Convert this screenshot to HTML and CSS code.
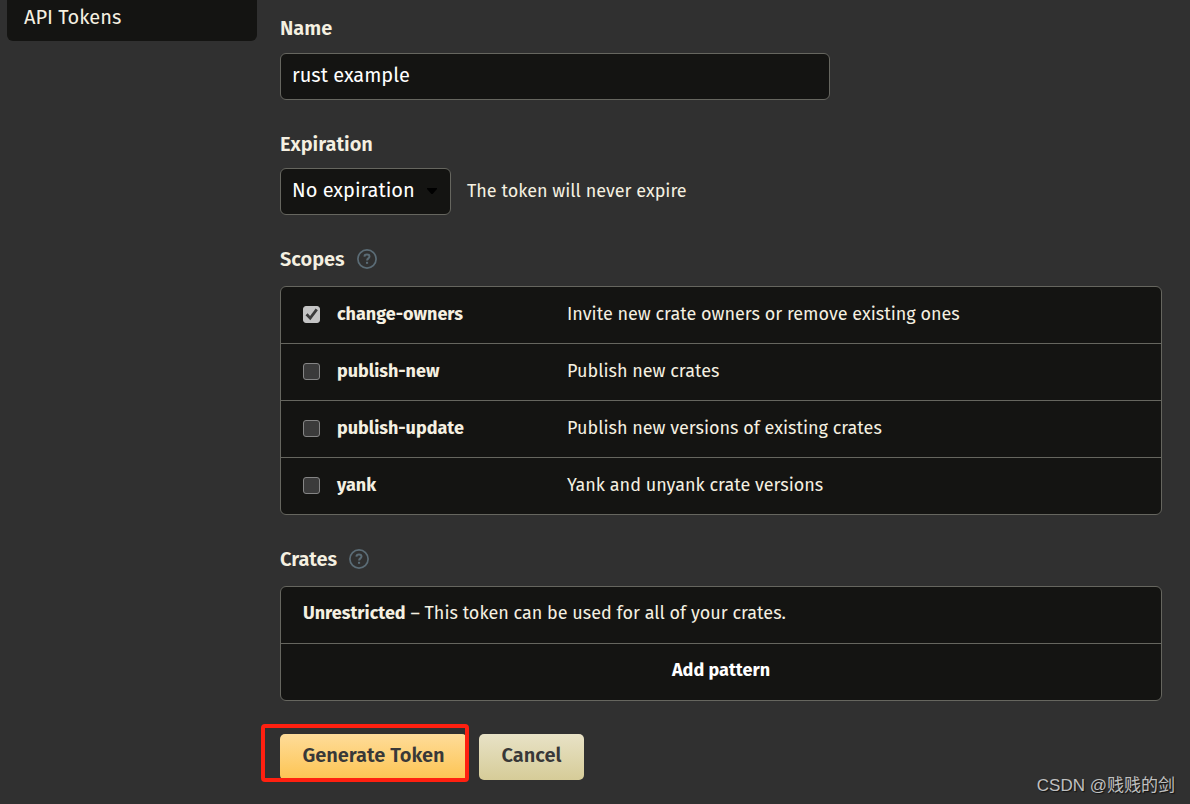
FILE: index.html
```html
<!DOCTYPE html>
<html lang="en">
<head>
<meta charset="utf-8">
<title>New API Token</title>
<link rel="stylesheet" href="styles.css">
</head>
<body>
<div class="page">
  <nav class="sidebar"><a class="sidebar-link" href="#">API Tokens</a></nav>
  <main class="main">
    <form class="form">
      <div class="group">
        <label class="group-label" for="name">Name</label>
        <input class="field name-input" id="name" type="text" value="rust example">
      </div>
      <div class="group expiry-group">
        <label class="group-label" for="expiry">Expiration</label>
        <div class="expiry-row">
          <div class="select-wrap">
            <select class="field select" id="expiry"><option>No expiration</option></select>
            <svg class="caret" viewBox="0 0 10 6" width="10" height="6" aria-hidden="true"><path d="M0 0h10v1L5.6 6H4.4L0 1z" fill="#000"/></svg>
          </div>
          <span class="expiry-note">The token will never expire</span>
        </div>
      </div>
      <div class="group list-group">
        <div class="group-label">Scopes
          <a class="help" href="#" aria-label="Help on scopes"><svg viewBox="0 0 20 20" width="20" height="20" fill="none" stroke="#5b6c76"><circle cx="10" cy="10" r="9.1" stroke-width="1.7"/><path d="M7.4 7.6C7.5 6.2 8.6 5.6 10 5.6c1.5 0 2.5.8 2.5 2 0 1.8-2.4 1.7-2.4 3.8" stroke-width="2"/><path d="M9 12.8h2.1v2H9z" fill="#5b6c76" stroke="none"/></svg></a>
        </div>
        <ul class="list">
          <li><label class="row scope"><input class="check" type="checkbox" checked><strong>change-owners</strong><span>Invite new crate owners or remove existing ones</span></label></li>
          <li><label class="row scope"><input class="check" type="checkbox"><strong>publish-new</strong><span>Publish new crates</span></label></li>
          <li><label class="row scope"><input class="check" type="checkbox"><strong>publish-update</strong><span>Publish new versions of existing crates</span></label></li>
          <li><label class="row scope"><input class="check" type="checkbox"><strong>yank</strong><span>Yank and unyank crate versions</span></label></li>
        </ul>
      </div>
      <div class="group list-group">
        <div class="group-label">Crates
          <a class="help" href="#" aria-label="Help on crates"><svg viewBox="0 0 20 20" width="20" height="20" fill="none" stroke="#5b6c76"><circle cx="10" cy="10" r="9.1" stroke-width="1.7"/><path d="M7.4 7.6C7.5 6.2 8.6 5.6 10 5.6c1.5 0 2.5.8 2.5 2 0 1.8-2.4 1.7-2.4 3.8" stroke-width="2"/><path d="M9 12.8h2.1v2H9z" fill="#5b6c76" stroke="none"/></svg></a>
        </div>
        <ul class="list">
          <li class="row"><p class="text"><strong>Unrestricted</strong> – This token can be used for all of your crates.</p></li>
          <li><button class="row add" type="button">Add pattern</button></li>
        </ul>
      </div>
      <div class="actions">
        <div class="generate-wrap"><button class="button generate" type="submit">Generate Token</button></div>
        <button class="button cancel" type="button">Cancel</button>
      </div>
    </form>
  </main>
  <div class="watermark">CSDN @贱贱的剑</div>
</div>
</body>
</html>
```
FILE: styles.css
```css
* { box-sizing: border-box; }

body {
  margin: 0;
  background: #303030;
  color: #f5f0e1;
  font: 18px/24px "Fira Sans", "Noto Sans", sans-serif;
}

.page {
  position: relative;
  display: grid;
  grid-template-columns: 250px minmax(0, 1fr);
  gap: 23px;
  min-height: 100vh;
  padding: 0 28px 0 7px;
}

.sidebar-link {
  display: block;
  padding: 5px 17px 12px;
  border-radius: 0 0 6px 6px;
  background: #141412;
  color: inherit;
  font-size: 20px;
  text-decoration: none;
}

.form {
  display: flex;
  flex-direction: column;
  gap: 32px;
  padding: 16px 0 24px;
}

.group {
  display: flex;
  flex-direction: column;
  align-items: flex-start;
  gap: 13px;
}

.expiry-group { gap: 12px; }

.list-group { gap: 15px; }

.group-label {
  display: flex;
  align-items: center;
  gap: 12px;
  font-size: 20px;
  font-weight: 600;
}

.help, .help svg { display: block; }

.field {
  height: 47px;
  padding: 0 11px 4px;
  border: 1px solid #66665f;
  border-radius: 6px;
  background: #141412;
  color: #fff;
  font: inherit;
  font-size: 20px;
}

.name-input {
  width: 100%;
  max-width: 550px;
}

.expiry-row {
  display: flex;
  align-items: center;
  gap: 16px;
}

.expiry-note { padding-bottom: 2px; }

.select-wrap { position: relative; }

.select {
  display: block;
  width: 171px;
  appearance: none;
}

.caret {
  position: absolute;
  top: 20px;
  right: 14px;
  pointer-events: none;
}

.list {
  width: 100%;
  margin: 0;
  padding: 0;
  overflow: hidden;
  border: 1px solid #66665f;
  border-radius: 6px;
  background: #141412;
  list-style: none;
}

.list li + li { border-top: 1px solid #66665f; }

.row { padding: 14px 22px 18px; }

.scope {
  display: grid;
  grid-template-columns: 17px 213px minmax(0, 1fr);
  column-gap: 17px;
  padding: 15px 22px 17px;
}

.text { margin: 0; }

.check {
  display: grid;
  place-items: center;
  width: 17px;
  height: 17px;
  margin: 4px 0 0;
  border: 1px solid #858585;
  border-radius: 3px;
  background: #3b3b3b;
  appearance: none;
}

.check:checked {
  border-color: #c4c4c4;
  background: #c4c4c4;
}

.check:checked::before {
  width: 13px;
  height: 13px;
  background: #3b3b3b;
  clip-path: polygon(4% 56%, 20% 40%, 39% 62%, 82% 4%, 99% 18%, 41% 94%);
  content: "";
}

.add {
  display: block;
  width: 100%;
  border: 0;
  background: none;
  color: #fff;
  font: inherit;
  font-weight: 700;
}

.actions {
  display: flex;
  gap: 12px;
  margin-top: 1px;
}

.generate-wrap { position: relative; }

.generate-wrap::after {
  position: absolute;
  inset: -10px -2px -2px -19px;
  border: 4px solid #ff2010;
  border-radius: 4px;
  content: "";
  pointer-events: none;
}

.button {
  display: block;
  height: 46px;
  padding: 0 22px 4px;
  border: 0;
  border-radius: 5px;
  color: #383838;
  font: inherit;
  font-size: 20px;
  font-weight: 600;
  white-space: nowrap;
}

.generate {
  min-width: 187px;
  background: linear-gradient(#fedc99, #fdc452);
}

.cancel {
  min-width: 105px;
  background: linear-gradient(#e8e2c6, #d6cc98);
}

.watermark {
  position: absolute;
  right: 15px;
  bottom: 6px;
  color: #c0c0c0;
  font: 17px/24px "Liberation Sans", "Noto Sans CJK SC", sans-serif;
  text-shadow: 1px 1px 1px #111;
}
```
